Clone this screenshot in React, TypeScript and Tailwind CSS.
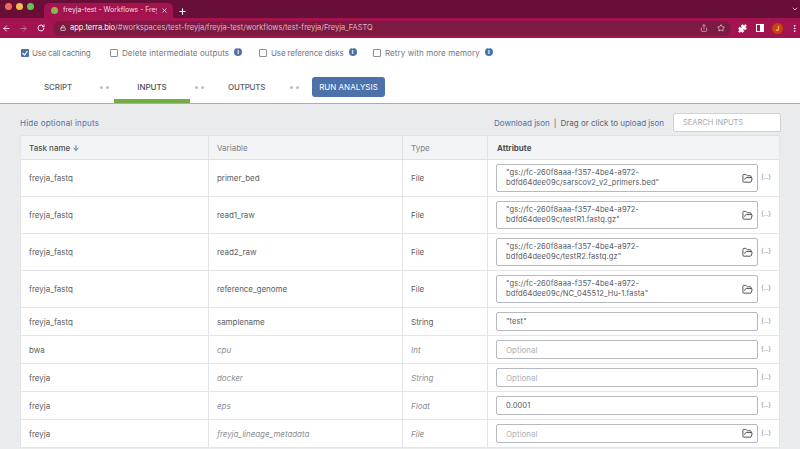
import { ArrowLeft, ArrowRight, ChevronDown, FolderOpen, Lock, MoreVertical, Plus, Puzzle, RotateCw, Share, Star, X, ArrowDown } from 'lucide-react';

const rows = [
  { task: 'freyja_fastq', variable: 'primer_bed', type: 'File', value: ['"gs://fc-260f8aaa-f357-4be4-a972-', 'bdfd64dee09c/sarscov2_v2_primers.bed"'], file: true },
  { task: 'freyja_fastq', variable: 'read1_raw', type: 'File', value: ['"gs://fc-260f8aaa-f357-4be4-a972-', 'bdfd64dee09c/testR1.fastq.gz"'], file: true },
  { task: 'freyja_fastq', variable: 'read2_raw', type: 'File', value: ['"gs://fc-260f8aaa-f357-4be4-a972-', 'bdfd64dee09c/testR2.fastq.gz"'], file: true },
  { task: 'freyja_fastq', variable: 'reference_genome', type: 'File', value: ['"gs://fc-260f8aaa-f357-4be4-a972-', 'bdfd64dee09c/NC_045512_Hu-1.fasta"'], file: true },
  { task: 'freyja_fastq', variable: 'samplename', type: 'String', value: ['"test"'] },
  { task: 'bwa', variable: 'cpu', type: 'Int', optional: true },
  { task: 'freyja', variable: 'docker', type: 'String', optional: true },
  { task: 'freyja', variable: 'eps', type: 'Float', optional: true, value: ['0.0001'] },
  { task: 'freyja', variable: 'freyja_lineage_metadata', type: 'File', optional: true, file: true },
];

function InfoDot() {
  return (
    <span className="ml-[5px] -mt-[2px] flex h-[8px] w-[8px] items-center justify-center rounded-full bg-[#4d72aa] text-[6px] font-bold leading-none text-white">i</span>
  );
}

function Option({ label, checked, info, className, textClass }: { label: string; checked?: boolean; info?: boolean; className: string; textClass: string }) {
  return (
    <div className={`flex items-center ${className}`}>
      {checked ? (
        <span className="mr-[3px] flex h-[8px] w-[8px] items-center justify-center rounded-[1px] bg-[#4d72aa]">
          <svg viewBox="0 0 8 8" className="h-[8px] w-[8px]" fill="none" stroke="white" strokeWidth="1.2"><path d="M1.5 4l2 2 3-4" /></svg>
        </span>
      ) : (
        <span className="mr-[4px] h-[8px] w-[8px] rounded-[1px] border border-[#8a8f96] bg-white" />
      )}
      <span className={`text-[8px] text-[#73777e] ${textClass}`}>{label}</span>
      {info && <InfoDot />}
    </div>
  );
}

function Dots({ className }: { className: string }) {
  return (
    <div className={`flex gap-[3px] ${className}`}>
      <span className="h-[3px] w-[3px] rounded-full bg-[#b9bdc2]" />
      <span className="h-[3px] w-[3px] rounded-full bg-[#b9bdc2]" />
    </div>
  );
}

export default function App() {
  return (
    <div className="h-[449px] w-[800px] overflow-hidden bg-[#e9ebed] font-['Inter',sans-serif] text-[#4d5156]">
      {/* browser tab strip */}
      <div className="flex h-[18px] items-end bg-[#690f37] pl-[4px]">
        <div className="mb-[8px] flex w-[40px] gap-[4px] pl-[1px]">
          <span className="h-[7px] w-[7px] rounded-full bg-[#ee6a5f]" />
          <span className="h-[7px] w-[7px] rounded-full bg-[#f5bd4f]" />
          <span className="h-[7px] w-[7px] rounded-full bg-[#61c554]" />
        </div>
        <div className="flex h-[15px] w-[129px] items-center rounded-t-[5px] bg-[#a3134f] pl-[7px] pr-[5px] text-white">
          <span className="mr-[5px] h-[7px] w-[7px] rounded-full bg-[#8fb34f]" />
          <span className="w-[94px] overflow-hidden whitespace-nowrap text-[7px] tracking-[-0.05px] text-[#f3d9e4]">freyja-test - Workflows - Freyja_FASTQ</span>
          <X className="ml-auto h-[7px] w-[7px]" strokeWidth={2.5} />
        </div>
        <Plus className="mb-[2px] ml-[5px] h-[9px] w-[9px] text-white" strokeWidth={3} />
        <ChevronDown className="mb-[5px] ml-auto mr-[1px] h-[8px] w-[8px] text-[#e9cbd8]" strokeWidth={2.5} />
      </div>
      {/* browser toolbar */}
      <div className="flex h-[20px] items-center bg-[#a3134f] pl-[2px] pr-[1px]">
        <ArrowLeft className="h-[9px] w-[9px] text-[#f6dfe9]" strokeWidth={2.5} />
        <ArrowRight className="ml-[8px] h-[9px] w-[9px] text-[#c9708f]" strokeWidth={2.5} />
        <RotateCw className="ml-[9px] h-[8px] w-[8px] text-[#f6dfe9]" strokeWidth={3} />
        <div className="ml-[8px] flex h-[15px] flex-1 items-center rounded-full bg-[#7c1a42] pl-[7px] pr-[5px]">
          <Lock className="mr-[4px] h-[6px] w-[6px] text-[#eed3de]" strokeWidth={3} />
          <span className="whitespace-nowrap text-[7.5px] tracking-[-0.02px] text-[#dcb4c6]"><span className="text-white">app.terra.bio</span>/#workspaces/test-freyja/freyja-test/workflows/test-freyja/Freyja_FASTQ</span>
          <Share className="ml-auto h-[8px] w-[8px] text-[#e3c3d1]" />
          <Star className="ml-[9px] mr-[1px] h-[8px] w-[8px] text-[#e3c3d1]" strokeWidth={2.5} />
        </div>
        <Puzzle className="ml-[7px] h-[9px] w-[9px] text-white" fill="white" />
        <span className="ml-[9px] flex h-[8px] w-[8px] justify-end border border-white bg-[#a3134f]"><span className="h-full w-[3px] bg-white" /></span>
        <span className="ml-[8px] flex h-[11px] w-[11px] items-center justify-center rounded-full bg-[#c9420f] text-[6px] text-white">J</span>
        <MoreVertical className="ml-[7px] h-[9px] w-[9px] text-white" strokeWidth={2.5} />
      </div>
      {/* options and tabs */}
      <div className="h-[66px] border-b-[1.5px] border-[#a2b889] bg-white">
        <div className="flex h-[28px] items-end pb-[7px]">
          <Option label="Use call caching" checked textClass="tracking-[-0.25px]" className="ml-[21px] w-[89px]" />
          <Option label="Delete intermediate outputs" info textClass="tracking-[0.1px]" className="w-[149px]" />
          <Option label="Use reference disks" info textClass="tracking-[-0.15px]" className="w-[114px]" />
          <Option label="Retry with more memory" info textClass="tracking-[0.08px]" className="" />
        </div>
        <div className="flex h-[37px] items-start pt-[11px] text-[8px] font-medium text-[#5b5f65]">
          <span className="ml-[44px] mt-[4px] w-[56px] tracking-[-0.1px]">SCRIPT</span>
          <Dots className="mt-[9px] w-[14px]" />
          <div className="flex h-[26px] w-[76px] justify-center border-b-[4px] border-[#74ae43] pt-[4px] tracking-[-0.05px] text-[#4d5156]">INPUTS</div>
          <Dots className="ml-[5px] mt-[9px] w-[33px]" />
          <span className="mt-[4px] w-[62px] tracking-[-0.2px]">OUTPUTS</span>
          <Dots className="mt-[9px] w-[22px]" />
          <div className="flex h-[20px] w-[73px] items-center justify-center rounded-[3px] bg-[#4d72aa] text-[8px] font-normal text-white">RUN ANALYSIS</div>
        </div>
      </div>
      {/* inputs toolbar */}
      <div className="flex h-[31px] items-start pl-[20px] pr-[19px] pt-[9px] text-[8px] text-[#4d72aa]">
        <span className="mt-[4px] tracking-[0.2px]">Hide optional inputs</span>
        <span className="ml-auto mt-[4px]">Download json</span>
        <span className="mx-[4px] mt-[4px] text-[#5b5f65]">|</span>
        <span className="mt-[4px] text-[#5b5f65]">Drag or click to <span className="text-[#4d72aa]">upload json</span></span>
        <div className="ml-[9px] flex h-[19px] w-[108px] items-center rounded-[2px] border border-[#cfd3d7] bg-white pl-[9px] text-[7.5px] text-[#a3a7ac]">SEARCH INPUTS</div>
      </div>
      {/* table */}
      <div className="mx-[20px] border-x border-[#e3e5e8] bg-white text-[8px]">
        <div className="grid h-[25px] grid-cols-[187px_194px_85px_292px] items-center border-y border-[#dfe2e5] bg-[#f3f4f5]">
          <div className="flex h-full items-center pl-[8px] font-medium text-[#4d5156]">Task name <ArrowDown className="ml-[2px] h-[8px] w-[8px] text-[#4d72aa]" strokeWidth={3} /></div>
          <div className="flex h-full items-center border-l border-[#dfe2e5] pl-[8px] text-[#7d8187]">Variable</div>
          <div className="flex h-full items-center border-l border-[#dfe2e5] pl-[8px] text-[#7d8187]">Type</div>
          <div className="flex h-full items-center border-l border-[#dfe2e5] pl-[9px] font-bold text-[#4d5156]">Attribute</div>
        </div>
        {rows.map((row, i) => (
          <div key={i} className={`grid grid-cols-[187px_194px_85px_292px] border-b border-[#e3e5e8] ${row.file && !row.optional ? 'h-[37px]' : 'h-[28px]'}`}>
            <div className="flex items-center pl-[8px] text-[#5b5f65]">{row.task}</div>
            <div className={`flex items-center border-l border-[#e3e5e8] pl-[8px] tracking-[-0.05px] ${row.optional ? 'italic text-[#8b8f95]' : 'text-[#5b5f65]'}`}>{row.variable}</div>
            <div className={`flex items-center border-l border-[#e3e5e8] pl-[8px] ${row.optional ? 'italic text-[#8b8f95]' : 'text-[#5b5f65]'}`}>{row.type}</div>
            <div className="flex items-center border-l border-[#e3e5e8] pl-[8px]">
              <div className={`flex w-[262px] items-center rounded-[2px] border border-[#b6babf] bg-white pl-[9px] pr-[4px] ${row.file && !row.optional ? 'h-[28px]' : 'h-[19px]'}`}>
                {row.value ? (
                  <div className="text-[7.5px] leading-[10px] tracking-[0.1px] text-[#55595f]">
                    {row.value.map((line) => <div key={line}>{line}</div>)}
                  </div>
                ) : (
                  <span className="text-[#aeb2b7]">Optional</span>
                )}
                {row.file && <FolderOpen className="ml-auto h-[11px] w-[11px] text-[#40454b]" strokeWidth={2} />}
              </div>
              <span className="ml-[3px] text-[6.5px] tracking-[-0.3px] text-[#8b8f95]">{'{...}'}</span>
            </div>
          </div>
        ))}
      </div>
    </div>
  );
}
